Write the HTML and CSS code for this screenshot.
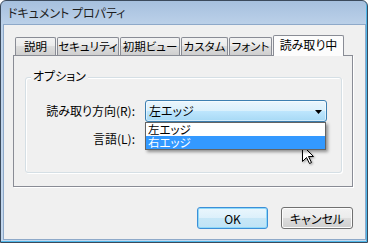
FILE: index.html
```html
<!DOCTYPE html>
<html lang="ja">
<head>
<meta charset="utf-8">
<link rel="stylesheet" href="styles.css">
</head>
<body>
<div class="window">
  <div class="titlebar">ドキュメント プロパティ</div>
  <div class="client">
    <div class="tabs">
      <div class="tab tab-desc">説明</div>
      <div class="tab tab-sec">セキュリティ</div>
      <div class="tab tab-view">初期ビュー</div>
      <div class="tab tab-custom">カスタム</div>
      <div class="tab tab-font">フォント</div>
      <div class="tab tab-read active">読み取り中</div>
    </div>
    <div class="panel">
      <div class="group">
        <span class="group-label">オプション</span>
        <div class="form">
          <label class="lbl">読み取り方向(R):</label>
          <div class="combo-wrap">
            <div class="combo">
              <span class="combo-text">左エッジ</span>
              <svg class="arrow" width="7" height="4" viewBox="0 0 7 4"><path d="M0 0H7L3.5 4Z" fill="#000"/></svg>
            </div>
            <ul class="droplist">
              <li class="item">左エッジ</li>
              <li class="item sel">右エッジ</li>
            </ul>
          </div>
          <label class="lbl">言語(L):</label>
          <div class="combo-spacer"></div>
        </div>
      </div>
    </div>
    <div class="buttons">
      <button class="btn default">OK</button>
      <button class="btn">キャンセル</button>
    </div>
  </div>
  <svg class="cursor" width="13" height="20" viewBox="0 0 13 20">
    <path d="M0.5 0.5 L0.5 16.5 L4.5 12.5 L7.5 18.5 L9.5 17.5 L6.5 11.5 L11.5 11.5 Z" fill="#fff" stroke="#000" stroke-width="1" stroke-linejoin="miter"/>
  </svg>
</div>
</body>
</html>
```
FILE: styles.css
```css
* { box-sizing: border-box; }
html, body { margin: 0; padding: 0; }
body {
  font-family: "Noto Sans CJK JP", "Noto Sans", sans-serif;
  font-size: 12px;
  font-feature-settings: "palt";
  color: #000;
  background: #fff;
}
.window {
  position: relative;
  width: 368px;
  height: 243px;
  border: 1px solid #3b4a5c;
  border-radius: 6px 6px 0 0;
  background: linear-gradient(#a6c0de, #bcd1e9 24px, #c3d7ed);
  box-shadow: inset -1px -1px 0 #4fb8ea;
  display: flex;
  flex-direction: column;
  overflow: hidden;
}
.titlebar {
  flex: none;
  height: 24px;
  line-height: 23px;
  padding-left: 7px;
  color: #1e1e1e;
  white-space: nowrap;
}
.client {
  flex: 1;
  margin: 0 2px 3px 3px;
  background: #f0f0f0;
  box-shadow: 0 0 0 1px #8ea9c9;
  padding: 10px 12px 0 9px;
  display: flex;
  flex-direction: column;
}
.tabs {
  display: flex;
  align-items: flex-end;
  height: 20px;
  margin-left: 2px;
  position: relative;
  z-index: 1;
}
.tab {
  flex: none;
  height: 18px;
  line-height: 17px;
  padding: 0;
  margin-right: 1px;
  text-align: center;
  font-size: 11.5px;
  border: 1px solid #898c95;
  border-bottom: none;
  border-radius: 2px 2px 0 0;
  background: linear-gradient(#f3f3f3, #ebebeb 50%, #dddddd 50%, #cfcfcf);
  white-space: nowrap;
}
.tab-desc { width: 41px; }
.tab-sec { width: 62px; }
.tab-view { width: 60px; }
.tab-custom { width: 47px; }
.tab-font { width: 43px; }
.tab-read { width: 71px; }
.tab.active {
  height: 21px;
  margin-bottom: -1px;
  line-height: 18px;
  font-size: 12px;
  background: #fcfcfc;
}
.panel {
  width: 340px;
  height: 132px;
  border: 1px solid #898c95;
  box-shadow: 1px 1px 0 #fff;
  padding: 21px 10px 0 11px;
}
.group {
  position: relative;
  width: 317px;
  height: 96px;
  border: 1px solid #d5dfe5;
  border-radius: 3px;
  box-shadow: inset 1px 1px 0 #fff, 1px 1px 0 #fff;
  padding-top: 22px;
}
.group-label {
  position: absolute;
  left: 5px;
  top: -9px;
  padding: 0 2px;
  line-height: 14px;
  background: #f0f0f0;
}
.form {
  display: grid;
  grid-template-columns: 109px 182px;
  grid-auto-rows: 22px;
  column-gap: 10px;
  row-gap: 6px;
  align-items: center;
}
.lbl {
  justify-self: end;
  line-height: 22px;
  white-space: nowrap;
}
.combo-wrap {
  position: relative;
  height: 22px;
}
.combo {
  height: 22px;
  border: 1px solid #3c7fb1;
  border-radius: 3px;
  background: linear-gradient(#eaf6fd, #d9f0fc 50%, #bee6fd 50%, #a7d9f5);
  box-shadow: inset 0 0 0 1px rgba(255,255,255,0.5);
  display: flex;
  align-items: center;
  justify-content: space-between;
  padding: 0 4px 0 3px;
}
.combo-text { line-height: 20px; }
.arrow { display: block; margin-top: 1px; }
.droplist {
  position: absolute;
  left: 0;
  top: 22px;
  width: 181px;
  margin: 0;
  padding: 0;
  list-style: none;
  border: 1px solid #646464;
  background: #fff;
  box-shadow: 2px 2px 3px rgba(0,0,0,0.4);
  z-index: 2;
}
.item {
  height: 13px;
  line-height: 13px;
  font-size: 11.5px;
  padding-left: 2px;
}
.item.sel {
  background: #3399ff;
  color: #fff;
}
.buttons {
  display: flex;
  justify-content: flex-end;
  gap: 13px;
  margin-top: 20px;
}
.btn {
  width: 72px;
  height: 22px;
  padding: 0;
  font: inherit;
  font-feature-settings: "palt";
  color: #000;
  border: 1px solid #707070;
  border-radius: 3px;
  background: linear-gradient(#f2f2f2, #ebebeb 50%, #dddddd 50%, #cfcfcf);
  box-shadow: inset 0 0 0 1px #fcfcfc;
}
.btn.default {
  width: 71px;
  border-color: #3c8fd8;
  background: linear-gradient(#eaf6fd, #dcf0fb 50%, #c7e7f7 50%, #bfe3f6);
  box-shadow: inset 0 0 0 1px #8fd9f8;
}
.cursor {
  position: absolute;
  left: 301px;
  top: 144px;
  filter: drop-shadow(1px 1px 1px rgba(0,0,0,0.35));
}
```
